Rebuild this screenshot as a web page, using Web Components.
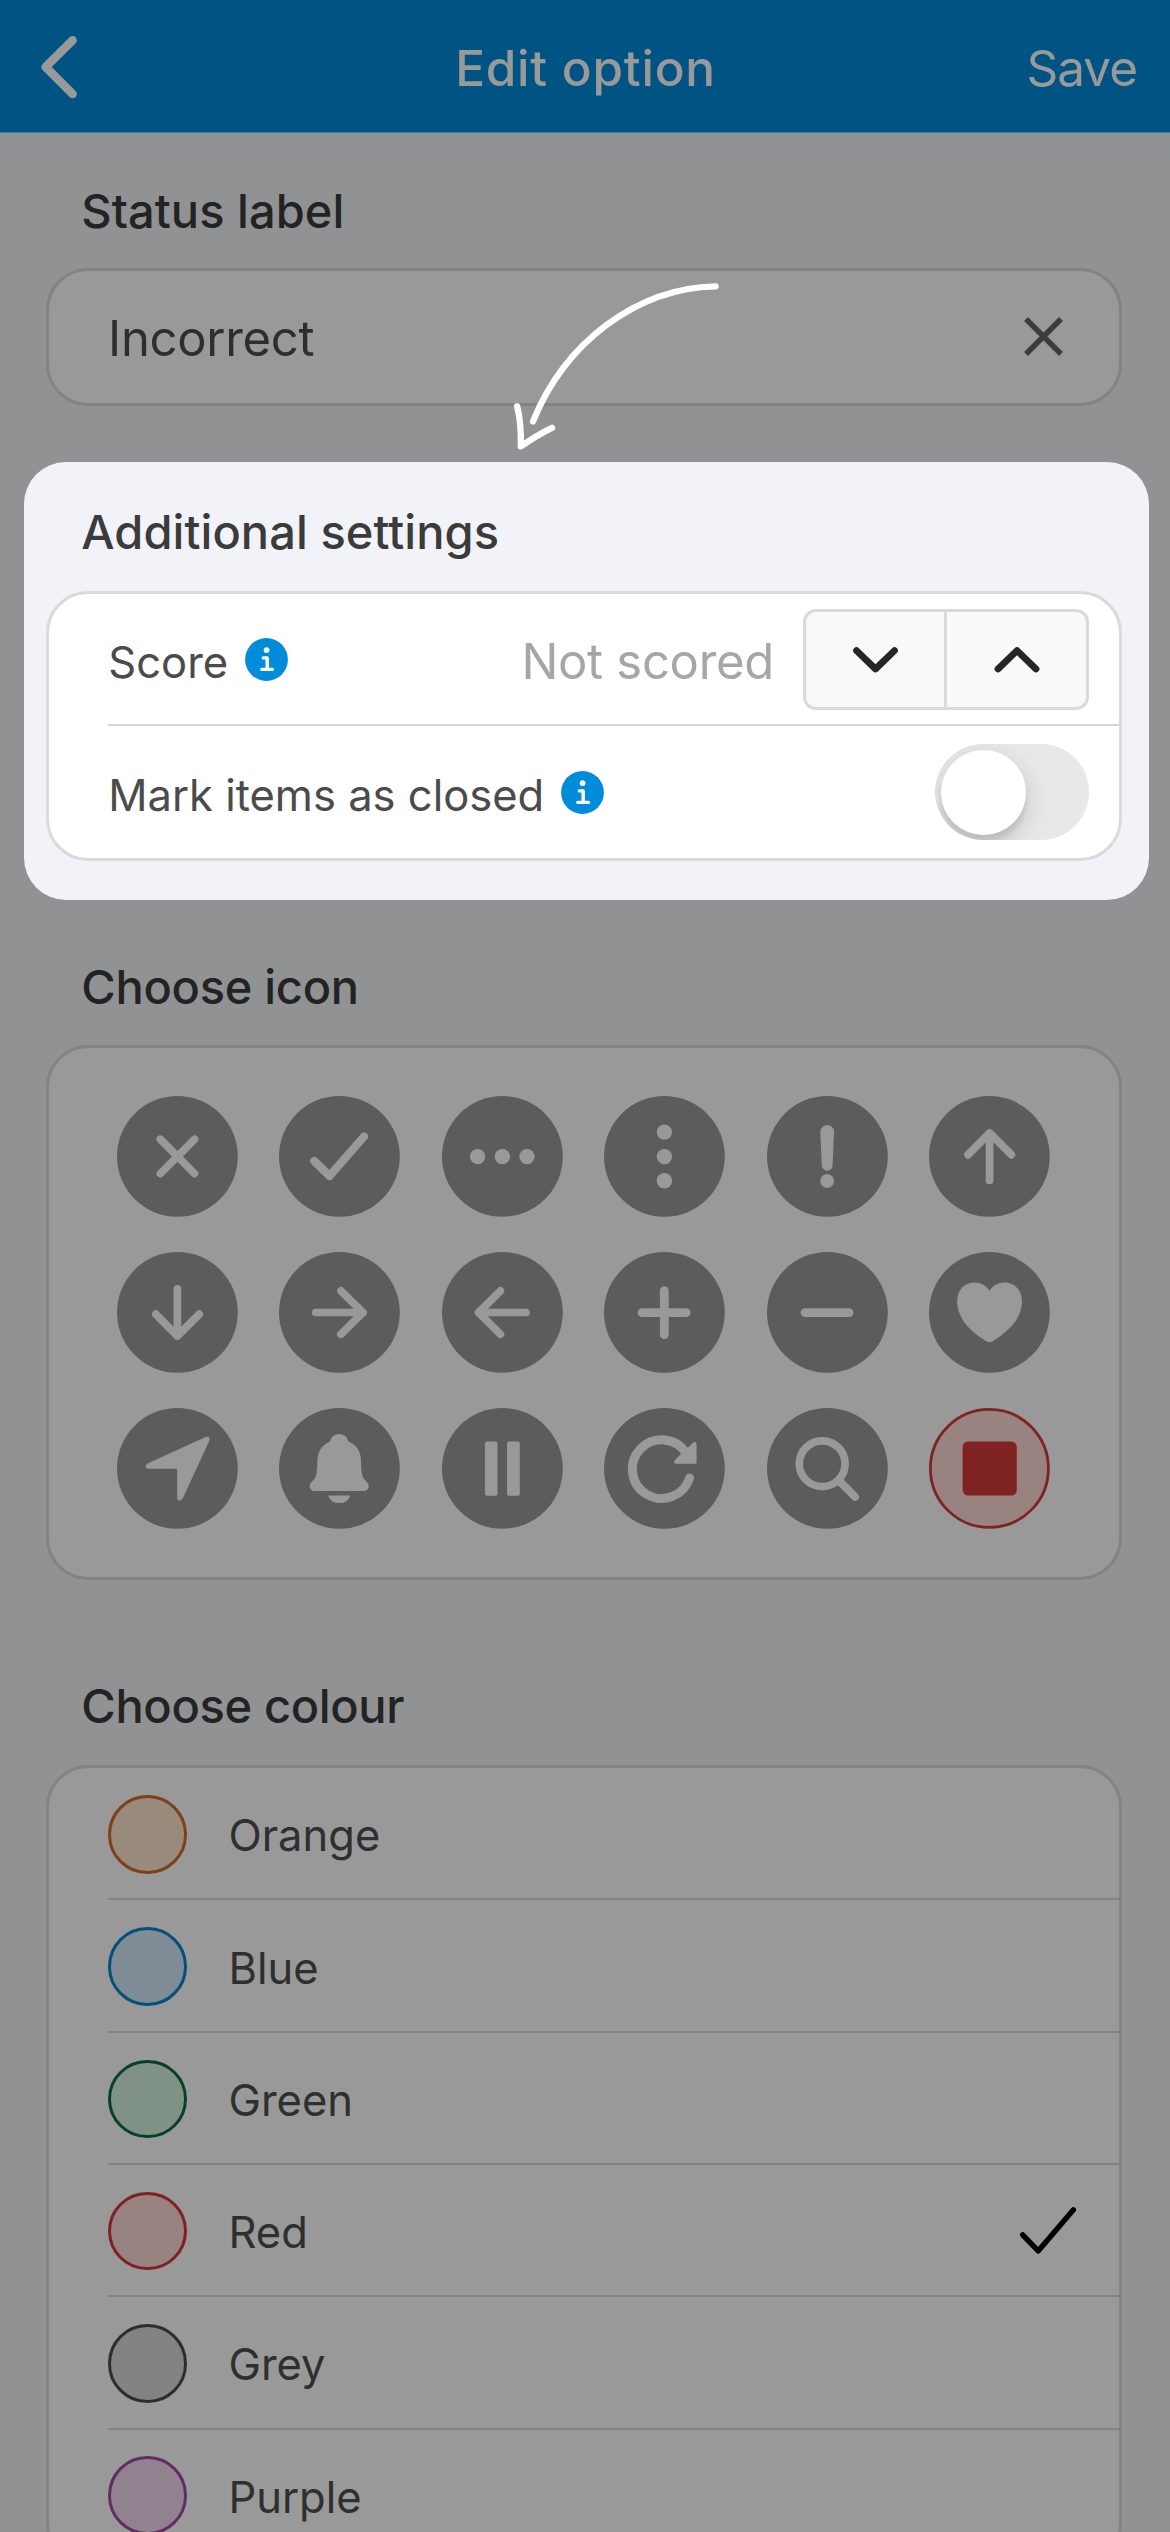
<!DOCTYPE html>
<html lang="en">
<head>
<meta charset="utf-8">
<title>Edit option</title>
<style>
  html, body { margin: 0; padding: 0; }
  body {
    width: 1170px; height: 2532px; overflow: hidden; background: #919294;
    font-family: Inter, Roboto, "Liberation Sans", sans-serif;
  }
</style>
</head>
<body>
<option-editor>
  <nav-header>
    <span slot="title">Edit option</span>
    <span slot="action">Save</span>
  </nav-header>

  <form-section style="--before:47.6px;--gap:27px">
    <span slot="heading">Status label</span>
    <card-box>
      <text-entry>Incorrect</text-entry>
    </card-box>
  </form-section>

  <spotlight-panel>
    <form-section style="--before:40px;--gap:28.8px">
      <span slot="heading">Additional settings</span>
      <card-box>
        <setting-row>Score<info-badge slot="info"></info-badge>
          <score-stepper slot="control">Not scored</score-stepper>
        </setting-row>
        <setting-row last>Mark items as closed<info-badge slot="info"></info-badge>
          <toggle-switch slot="control"></toggle-switch>
        </setting-row>
      </card-box>
    </form-section>
  </spotlight-panel>

  <form-section style="--before:56.9px;--gap:28.2px;--track:-.28px">
    <span slot="heading">Choose icon</span>
    <card-box>
      <icon-grid>
        <icon-disc name="cross"></icon-disc>
        <icon-disc name="check"></icon-disc>
        <icon-disc name="dots"></icon-disc>
        <icon-disc name="vdots"></icon-disc>
        <icon-disc name="exclaim"></icon-disc>
        <icon-disc name="up"></icon-disc>
        <icon-disc name="down"></icon-disc>
        <icon-disc name="right"></icon-disc>
        <icon-disc name="left"></icon-disc>
        <icon-disc name="plus"></icon-disc>
        <icon-disc name="minus"></icon-disc>
        <icon-disc name="heart"></icon-disc>
        <icon-disc name="locate"></icon-disc>
        <icon-disc name="bell"></icon-disc>
        <icon-disc name="pause"></icon-disc>
        <icon-disc name="refresh"></icon-disc>
        <icon-disc name="search"></icon-disc>
        <icon-disc name="stop" selected></icon-disc>
      </icon-grid>
    </card-box>
  </form-section>

  <form-section style="--before:95.9px;--gap:29.4px;--track:-.33px">
    <span slot="heading">Choose colour</span>
    <card-box>
      <colour-row style="--edge:#7d4018;--fill:#998b7c">Orange</colour-row>
      <colour-row style="--edge:#01507d;--fill:#7f8b95">Blue</colour-row>
      <colour-row style="--edge:#05402b;--fill:#809285">Green</colour-row>
      <colour-row style="--edge:#7e2122;--fill:#988381" checked>Red</colour-row>
      <colour-row style="--edge:#2d2d2d;--fill:#838383">Grey</colour-row>
      <colour-row style="--edge:#622d64;--fill:#90838f" last>Purple</colour-row>
    </card-box>
  </form-section>

  <pointer-arrow slot="overlay"></pointer-arrow>
</option-editor>

<script>
const define = (name, html) => customElements.define(name, class extends HTMLElement {
  constructor() {
    super();
    this.attachShadow({ mode: 'open' });
  }
  connectedCallback() {
    this.shadowRoot.innerHTML = typeof html === 'function' ? html(this) : html;
  }
});

define('option-editor', `
  <style>
    :host { display: flex; flex-direction: column; position: relative; width: 1170px; height: 2532px; overflow: hidden;
      --line: #838383; --surface: #999; --heading: #232323; --text: #2f2f2f; --rule: #828282; }
  </style>
  <slot></slot><slot name="overlay"></slot>`);

define('nav-header', `
  <style>
    :host { display: grid; grid-template-columns: 1fr auto 1fr; align-items: center; flex: none; box-sizing: border-box;
      height: 133px; padding: 4px 33px 0 37px; background: #005484; border-bottom: 1px solid #4c7fa0;
      color: #999; font-size: 49.5px; line-height: 60px; }
    svg { display: block; }
    .title { font-weight: 500; letter-spacing: .75px; margin-right: 3px; }
    .action { justify-self: end; letter-spacing: -1px; }
  </style>
  <svg width="44" height="72" viewBox="0 0 44 72" fill="none" stroke="#999" stroke-width="8.6" stroke-linecap="round" stroke-linejoin="round"><path d="M35.6 8.2 L8.6 35 L35.6 62"/></svg>
  <div class="title"><slot name="title"></slot></div>
  <div class="action"><slot name="action"></slot></div>`);

define('form-section', `
  <style>
    :host { display: flex; flex-direction: column; flex: none; width: 1076.3px; margin-left: 45.7px; padding-top: var(--before); }
    h2 { margin: 0 0 var(--gap); padding-left: 35.6px; font-size: 47px; line-height: 60px; font-weight: 500;
      letter-spacing: var(--track, .06px); color: var(--heading); }
  </style>
  <h2><slot name="heading"></slot></h2><slot></slot>`);

define('card-box', `
  <style>
    :host { display: flex; flex-direction: column; border: 3px solid var(--line); border-radius: 42px; background: var(--surface); }
  </style>
  <slot></slot>`);

define('text-entry', `
  <style>
    :host { display: flex; align-items: center; justify-content: space-between; height: 132px; padding: 0 55.5px 0 59.4px;
      font-size: 49px; line-height: 60px; letter-spacing: -.3px; color: #2e2e2e; }
    span { padding-top: 4px; }
  </style>
  <span><slot></slot></span>
  <svg width="39" height="39" viewBox="0 0 39 39" stroke="#3c3c3c" stroke-width="5.4"><path d="M2 2 L37 37 M37 2 L2 37"/></svg>`);

define('spotlight-panel', `
  <style>
    :host { display: block; flex: none; box-sizing: border-box; width: 1125px; height: 438px; margin: 56.2px 0 0 24px;
      border-radius: 42px; background: #f2f3f8;
      --line: #dadada; --surface: #fff; --heading: #3b3b3b; --text: #4b4b4b; --rule: #d3d3d3; }
    ::slotted(form-section) { margin-left: 21.7px !important; }
  </style>
  <slot></slot>`);

define('setting-row', `
  <style>
    :host { display: flex; align-items: center; box-sizing: border-box; height: 132.3px; margin-left: 59.6px; padding: 2px 30px 0 0;
      border-bottom: 2px solid var(--rule); font-size: 43.5px; line-height: 54px; color: var(--text); }
    :host([last]) { border-bottom-color: transparent; }
    .label { padding-top: 5px; }
    .info { margin-left: 17px; display: flex; }
    .control { margin-left: auto; }
  </style>
  <span class="label"><slot></slot></span>
  <span class="info"><slot name="info"></slot></span>
  <span class="control"><slot name="control"></slot></span>`);

define('info-badge', `
  <style>:host { display: block; } svg { display: block; }</style>
  <svg width="43" height="43" viewBox="0 0 43 43"><circle cx="21.5" cy="21.5" r="21.4" fill="#008cdb"/>
    <circle cx="21.6" cy="12.1" r="2.9" fill="#fff"/>
    <path d="M18.3 19.9 H22.2 V31.4 M16.8 31.4 H27.4" fill="none" stroke="#fff" stroke-width="3.4" stroke-linecap="round" stroke-linejoin="round"/></svg>`);

define('score-stepper', `
  <style>
    :host { display: flex; align-items: center; color: #a6a6a6; font-size: 49px; line-height: 60px; letter-spacing: -.3px; }
    .value { padding-top: 4px; margin-right: 29px; }
    .buttons { display: flex; box-sizing: border-box; width: 286px; height: 101px; border: 3px solid #dadada; border-radius: 13px; background: #f9f9f9; }
    .buttons > div { flex: 1; display: flex; align-items: center; justify-content: center; }
    .buttons > div + div { border-left: 3px solid #dadada; }
  </style>
  <span class="value"><slot></slot></span>
  <div class="buttons">
    <div><svg width="46" height="28" viewBox="0 0 46 28" fill="none" stroke="#262626" stroke-width="6.8" stroke-linecap="round" stroke-linejoin="round"><path d="M4.5 4.6 L23.5 23 L42.5 4.6"/></svg></div>
    <div><svg width="46" height="28" viewBox="0 0 46 28" fill="none" stroke="#262626" stroke-width="6.8" stroke-linecap="round" stroke-linejoin="round"><path d="M4 23 L23 4.6 L42 23"/></svg></div>
  </div>`);

define('toggle-switch', `
  <style>
    :host { display: flex; box-sizing: border-box; width: 154px; height: 96px; padding: 6px; border-radius: 48px; background: #e8e8e8; overflow: hidden; }
    div { width: 84.6px; height: 84.6px; border-radius: 50%; background: #fff;
      box-shadow: 0 9px 26px rgba(0,0,0,.16), 0 8px 4px rgba(0,0,0,.08); }
  </style>
  <div></div>`);

define('icon-grid', `
  <style>
    :host { display: grid; grid-template-columns: repeat(6, 120.8px); gap: 35.5px 41.6px; padding: 47.9px 0 48.1px 68.4px; height: 433px; }
  </style>
  <slot></slot>`);

const glyphs = {
  cross: `<path class="s" d="M43.3 43.3 L77.6 77.6 M77.6 43.3 L43.3 77.6"/>`,
  check: `<path class="s" d="M35.3 65 L50.5 80 L85 40.6" stroke-width="8.2"/>`,
  dots: `<circle cx="35.6" cy="60.6" r="7.7"/><circle cx="60.4" cy="60.6" r="7.7"/><circle cx="85" cy="60.6" r="7.7"/>`,
  vdots: `<circle cx="60.4" cy="36.1" r="7.7"/><circle cx="60.4" cy="60.6" r="7.7"/><circle cx="60.4" cy="84.8" r="7.7"/>`,
  exclaim: `<path d="M53.3 36.3 C53.3 32 56.3 29.3 60.2 29.3 S67.1 32 67.1 36.3 L65.6 69 C65.4 72.5 63.3 74.7 60.2 74.7 S55 72.5 54.8 69 Z"/><circle cx="60.2" cy="85" r="6.9"/>`,
  up: `<path class="s" d="M39 58.8 L60.6 37 L82.4 58.8 M60.6 37 V84.4"/>`,
  down: `<path class="s" d="M38.8 62.2 L60.4 84 L82.2 62.2 M60.4 84 V36.8"/>`,
  right: `<path class="s" d="M62 38.9 L84 60.5 L62 82.2 M84 60.5 H36.8"/>`,
  left: `<path class="s" d="M58.4 38.9 L36.6 60.5 L58.4 82.2 M36.6 60.5 H84"/>`,
  plus: `<path class="s" d="M38.1 60.6 H82.1 M60.3 38.6 V82.6" stroke-width="8.8"/>`,
  minus: `<path class="s" d="M38.1 60.6 H82.1" stroke-width="8.8"/>`,
  heart: `<path d="M60.5 38.7 C64 33.5 69.5 30.6 75.5 30.6 C86 30.6 93 38.5 93 49.5 C93 66 80 79.5 63.3 89.4 Q60.5 91 57.7 89.4 C41 79.5 28.2 66 28.2 49.5 C28.2 38.5 35 30.6 45.5 30.6 C51.5 30.6 57 33.5 60.5 38.7Z"/>`,
  locate: `<path d="M88.7 29.1 Q93.8 27.9 92.2 33 L66.2 89.6 Q64.8 92.6 62.6 92.6 Q60.2 92.3 60.2 89.4 V60.8 H32 Q29 60.8 28.7 58.2 Q28.6 56.4 31 55.3 Z"/>`,
  bell: `<path d="M60.2 26 C64.7 26 68.2 28.8 69.3 33.4 C77.6 37 81.6 43 82 52 C82.3 60 82 64 84 69.2 C86 73.2 89.7 74.5 89.7 78 C89.7 81 87.5 83 84.5 83 H35.9 C32.8 83 30.7 81 30.7 78 C30.7 74.5 34.4 73.2 36.4 69.2 C38.4 64 38.1 60 38.4 52 C38.8 43 42.8 37 51.1 33.4 C52.2 28.8 55.7 26 60.2 26Z"/><path d="M49.3 87.4 H71.2 Q69 95 60.2 95 Q51.5 95 49.3 87.4Z"/>`,
  pause: `<rect x="42.9" y="33.5" width="12.6" height="54.3" rx="2"/><rect x="65" y="33.5" width="12.8" height="54.3" rx="2"/>`,
  refresh: `<path class="s" d="M85.6 70 A29.3 29.3 0 1 1 82.5 45.6" stroke-width="9" /><path d="M80 43.5 L88.6 35 Q92.4 32.6 92.6 36.4 V54.3 Q92.6 55.8 91 55.8 H72.6 Q68.6 55.2 71 51.9 L80 43 Z"/>`,
  search: `<circle class="s" cx="55.2" cy="55.7" r="22.9"/><path class="s" d="M73 73.6 L88 88.8" stroke-width="8"/>`,
  stop: `<rect x="33.6" y="33.4" width="54.2" height="54.2" rx="5.5"/>`
};

define('icon-disc', el => {
  const on = el.hasAttribute('selected');
  return `
  <style>
    :host { display: block; width: 120.8px; height: 120.8px; --ink: ${on ? '#7e2222' : '#999'}; }
    svg { display: block; width: 100%; height: 100%; overflow: visible; fill: var(--ink); }
    .s { fill: none; stroke: var(--ink); stroke-linecap: round; stroke-linejoin: round; }
  </style>
  <svg viewBox="0 0 120.8 120.8" stroke-width="7.7">${on
    ? '<circle cx="60.4" cy="60.4" r="59" style="fill:#988381;stroke:#7e2222;stroke-width:2.8"/>'
    : '<circle cx="60.4" cy="60.4" r="60.4" style="fill:#5c5c5c"/>'}${glyphs[el.getAttribute('name')]}</svg>`;
});

define('colour-row', el => `
  <style>
    :host { display: flex; align-items: center; box-sizing: border-box; height: 132.3px; margin-left: 59.6px; padding: 2px 39.5px 0 0;
      border-bottom: 2px solid var(--rule); font-size: 43.5px; line-height: 54px; color: var(--text); }
    :host([last]) { border-bottom-color: transparent; }
    .swatch { box-sizing: border-box; width: 78.6px; height: 78.6px; border: 3px solid var(--edge); border-radius: 50%; background: var(--fill); }
    .label { margin-left: 41.6px; padding-top: 2px; }
    svg { margin-left: auto; }
  </style>
  <div class="swatch"></div><span class="label"><slot></slot></span>
  ${el.hasAttribute('checked') ? '<svg width="62" height="56" viewBox="0 0 62 56" fill="none" stroke="#000" stroke-width="5.4" stroke-linecap="round" stroke-linejoin="round"><path d="M5.7 31.8 L21.2 47.9 L56.4 6.8"/></svg>' : ''}`);

define('pointer-arrow', `
  <style>
    :host { display: block; position: absolute; left: 500px; top: 270px; width: 240px; height: 190px; }
    svg { display: block; }
  </style>
  <svg width="240" height="190" viewBox="500 270 240 190" fill="none" stroke="#fff" stroke-width="6.3" stroke-linecap="round" stroke-linejoin="round">
    <path d="M715.6 286.3 C636 288 565 343 533 421.4"/>
    <path d="M517.2 406.4 C520.4 419 521.2 432 520.8 446.4 C530 440 541 433 552 427.8"/>
  </svg>`);
</script>
</body>
</html>
